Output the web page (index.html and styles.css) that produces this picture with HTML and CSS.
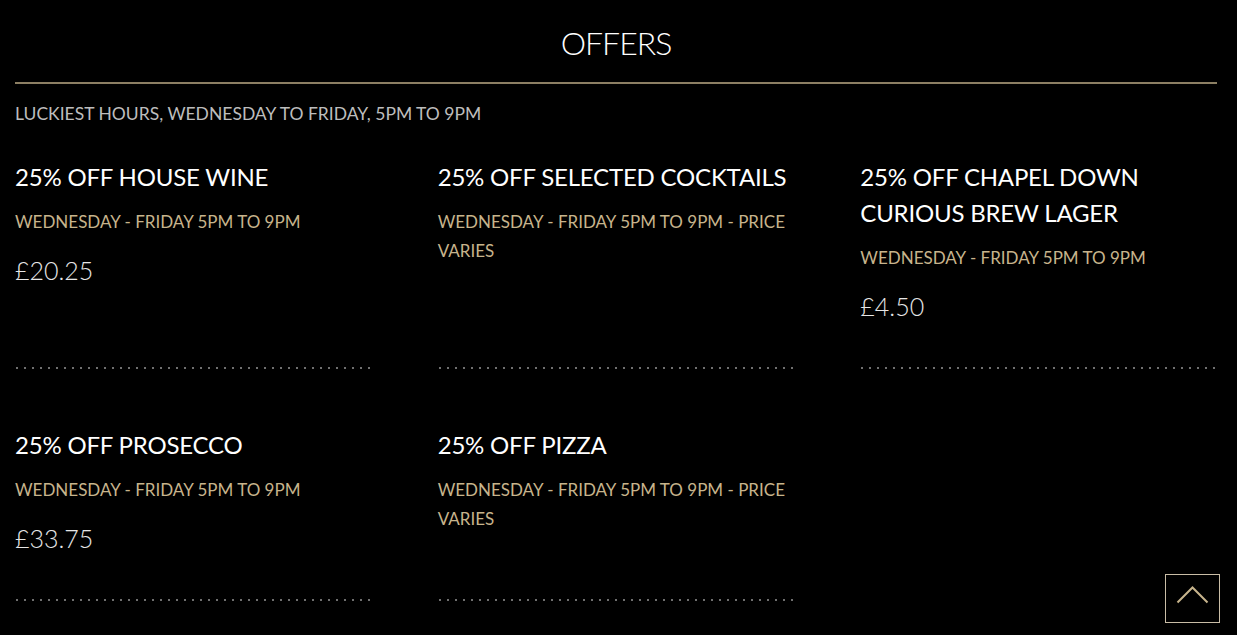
FILE: index.html
```html
<!DOCTYPE html>
<html lang="en">
<head>
  <meta charset="UTF-8">
  <title>Offers</title>
  <link rel="stylesheet" href="styles.css">
</head>
<body>
  <div class="container">
    <h1 class="page-title">Offers</h1>
    <p class="intro">Luckiest hours, Wednesday to Friday, 5pm to 9pm</p>

    <div class="offers">
      <div class="offer">
        <h2 class="offer-title">25% off house wine</h2>
        <p class="offer-when">Wednesday - Friday 5pm to 9pm</p>
        <p class="offer-price">£20.25</p>
      </div>
      <div class="offer">
        <h2 class="offer-title">25% off selected cocktails</h2>
        <p class="offer-when">Wednesday - Friday 5pm to 9pm - price varies</p>
      </div>
      <div class="offer">
        <h2 class="offer-title">25% off Chapel Down Curious Brew Lager</h2>
        <p class="offer-when">Wednesday - Friday 5pm to 9pm</p>
        <p class="offer-price">£4.50</p>
      </div>
      <div class="offer">
        <h2 class="offer-title">25% off prosecco</h2>
        <p class="offer-when">Wednesday - Friday 5pm to 9pm</p>
        <p class="offer-price">£33.75</p>
      </div>
      <div class="offer">
        <h2 class="offer-title">25% off pizza</h2>
        <p class="offer-when">Wednesday - Friday 5pm to 9pm - price varies</p>
      </div>
    </div>
  </div>

  <!-- Volver arriba -->
  <a class="to-top" href="#">
    <svg width="33" height="19" viewBox="0 0 33 19">
      <polyline points="1.5,17.5 16.5,2.5 31.5,17.5" fill="none" stroke="#c7b48c" stroke-width="2"/>
    </svg>
  </a>
</body>
</html>
```

FILE: styles.css
```css
body {
  font-family: Lato, "Open Sans", sans-serif;
  margin: 0;
  padding: 0;
  background-color: #000;
  color: #fff;
  overflow-x: hidden;
}

.container {
  padding: 0 20px 0 15px;
}

.page-title {
  font-size: 32px;
  font-weight: 300;
  letter-spacing: -1px;
  text-transform: uppercase;
  text-align: center;
  line-height: 50px;
  margin: 0;
  padding: 18px 0 14px;
  border-bottom: 2px solid #8c7f63;
}

.intro {
  font-size: 17.5px;
  line-height: 27px;
  text-transform: uppercase;
  color: #bdbdbd;
  margin: 16px 0 32px;
}

.offers {
  display: grid;
  grid-template-columns: repeat(3, 1fr);
  column-gap: 66px;
  row-gap: 58px;
}

.offer {
  display: flex;
  flex-direction: column;
  padding-bottom: 2px;
  background-image: linear-gradient(to right, #707070 2px, transparent 2px);
  background-size: 8px 2px;
  background-repeat: repeat-x;
  background-position: 1px bottom;
}

.offer-title {
  font-size: 24px;
  font-weight: 400;
  letter-spacing: -0.2px;
  line-height: 36px;
  text-transform: uppercase;
  margin: 0;
}

.offer-when {
  font-size: 17px;
  line-height: 29px;
  text-transform: uppercase;
  color: #c7b48c;
  margin: 12px 0 0;
}

.offer-price {
  font-size: 25px;
  font-weight: 300;
  line-height: 36px;
  color: #e6e6e6;
  margin: 16px 0 0;
}

.offer > :last-child {
  margin-bottom: 43px;
}

.to-top {
  position: fixed;
  right: 17px;
  bottom: 12px;
  width: 53px;
  height: 47px;
  border: 1px solid #c9bda6;
  display: flex;
  justify-content: center;
  align-items: flex-start;
}

.to-top svg {
  margin-top: 10px;
}
```
